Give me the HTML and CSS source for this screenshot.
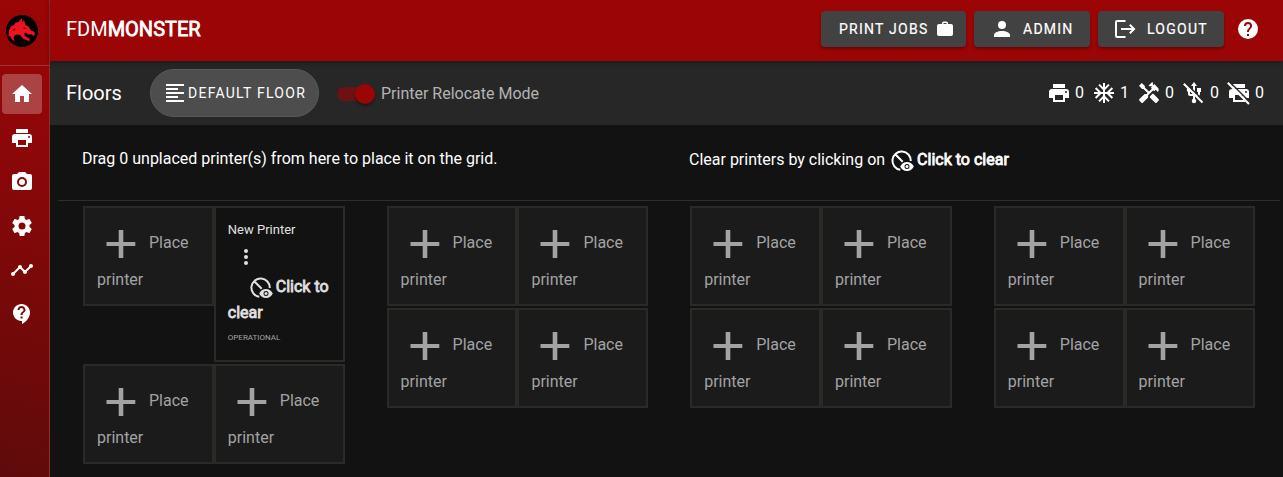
FILE: index.html
```
<!DOCTYPE html>
<html lang="en">
<head>
<meta charset="utf-8">
<title>FDM Monster</title>
<link rel="stylesheet" href="styles.css">
</head>
<body>
<svg class="sprite" aria-hidden="true">
  <symbol id="home" viewBox="0 0 24 24"><path d="M10,20V14H14V20H19V12H22L12,3L2,12H5V20H10Z"/></symbol>
  <symbol id="printer" viewBox="0 0 24 24"><path d="M18,3H6V7H18M19,12A1,1 0 0,1 18,11A1,1 0 0,1 19,10A1,1 0 0,1 20,11A1,1 0 0,1 19,12M16,19H8V14H16M19,8H5A3,3 0 0,0 2,11V17H6V21H18V17H22V11A3,3 0 0,0 19,8Z"/></symbol>
  <symbol id="camera" viewBox="0 0 24 24"><path d="M4,4H7L9,2H15L17,4H20A2,2 0 0,1 22,6V18A2,2 0 0,1 20,20H4A2,2 0 0,1 2,18V6A2,2 0 0,1 4,4M12,7A5,5 0 0,0 7,12A5,5 0 0,0 12,17A5,5 0 0,0 17,12A5,5 0 0,0 12,7M12,9A3,3 0 0,1 15,12A3,3 0 0,1 12,15A3,3 0 0,1 9,12A3,3 0 0,1 12,9Z"/></symbol>
  <symbol id="cog" viewBox="0 0 24 24"><path d="M12,15.5A3.5,3.5 0 0,1 8.5,12A3.5,3.5 0 0,1 12,8.5A3.5,3.5 0 0,1 15.5,12A3.5,3.5 0 0,1 12,15.5M19.43,12.97C19.47,12.65 19.5,12.33 19.5,12C19.5,11.67 19.47,11.34 19.43,11L21.54,9.37C21.73,9.22 21.78,8.95 21.66,8.73L19.66,5.27C19.54,5.05 19.27,4.96 19.05,5.05L16.56,6.05C16.04,5.66 15.5,5.32 14.87,5.07L14.5,2.42C14.46,2.18 14.25,2 14,2H10C9.75,2 9.54,2.18 9.5,2.42L9.13,5.07C8.5,5.32 7.96,5.66 7.44,6.05L4.95,5.05C4.73,4.96 4.46,5.05 4.34,5.27L2.34,8.73C2.21,8.95 2.27,9.22 2.46,9.37L4.57,11C4.53,11.34 4.5,11.67 4.5,12C4.5,12.33 4.53,12.65 4.57,12.97L2.46,14.63C2.27,14.78 2.21,15.05 2.34,15.27L4.34,18.73C4.46,18.95 4.73,19.03 4.95,18.95L7.44,17.94C7.96,18.34 8.5,18.68 9.13,18.93L9.5,21.58C9.54,21.82 9.75,22 10,22H14C14.25,22 14.46,21.82 14.5,21.58L14.87,18.93C15.5,18.67 16.04,18.34 16.56,17.94L19.05,18.95C19.27,19.03 19.54,18.95 19.66,18.73L21.66,15.27C21.78,15.05 21.73,14.78 21.54,14.63L19.43,12.97Z"/></symbol>
  <symbol id="timeline" viewBox="0 0 24 24"><path d="M23,8c0,1.1-0.9,2-2,2c-0.18,0-0.35-0.02-0.51-0.07l-3.56,3.55C16.98,13.64,17,13.82,17,14c0,1.1-0.9,2-2,2s-2-0.9-2-2c0-0.18,0.02-0.36,0.07-0.52l-2.55-2.55C10.36,10.98,10.18,11,10,11s-0.36-0.02-0.52-0.07l-4.55,4.56C4.98,15.65,5,15.82,5,16c0,1.1-0.9,2-2,2s-2-0.9-2-2s0.9-2,2-2c0.18,0,0.35,0.02,0.51,0.07l4.56-4.55C8.02,9.36,8,9.18,8,9c0-1.1,0.9-2,2-2s2,0.9,2,2c0,0.18-0.02,0.36-0.07,0.52l2.55,2.55C14.64,12.02,14.82,12,15,12s0.36,0.02,0.52,0.07l3.55-3.56C19.02,8.35,19,8.18,19,8c0-1.1,0.9-2,2-2S23,6.9,23,8z"/></symbol>
  <symbol id="support" viewBox="0 0 24 24"><path d="M11.5 2C6.81 2 3 5.81 3 10.5S6.81 19 11.5 19h.5v3c4.86-2.34 8-7 8-11.5C20 5.81 16.19 2 11.5 2zm1 14.5h-2v-2h2v2zm0-3.5h-2c0-3.25 3-3 3-5 0-1.1-.9-2-2-2s-2 .9-2 2h-2c0-2.21 1.79-4 4-4s4 1.79 4 4c0 2.5-3 2.75-3 5z"/></symbol>
  <symbol id="help" viewBox="0 0 24 24"><path d="M15.07,11.25L14.17,12.17C13.45,12.89 13,13.5 13,15H11V14.5C11,13.39 11.45,12.39 12.17,11.67L13.41,10.41C13.78,10.05 14,9.55 14,9C14,7.89 13.1,7 12,7A2,2 0 0,0 10,9H8A4,4 0 0,1 12,5A4,4 0 0,1 16,9C16,9.88 15.64,10.67 15.07,11.25M13,19H11V17H13M12,2A10,10 0 0,0 2,12A10,10 0 0,0 12,22A10,10 0 0,0 22,12C22,6.47 17.5,2 12,2Z"/></symbol>
  <symbol id="account" viewBox="0 0 24 24"><path d="M12,4A4,4 0 0,1 16,8A4,4 0 0,1 12,12A4,4 0 0,1 8,8A4,4 0 0,1 12,4M12,14C16.42,14 20,15.79 20,18V20H4V18C4,15.79 7.58,14 12,14Z"/></symbol>
  <symbol id="logout" viewBox="0 0 24 24"><path d="M4 3H12.5V5H4V19H12.5V21H4A2 2 0 0 1 2 19V5A2 2 0 0 1 4 3ZM17.5 7L22.5 12L17.5 17L16.1 15.6L18.7 13H8V11H18.7L16.1 8.4Z"/></symbol>
  <symbol id="bag" viewBox="0 0 18 18"><path d="M6 4V3A1.7 1.7 0 0 1 7.7 1.5H10.3A1.7 1.7 0 0 1 12 3V4H15A2 2 0 0 1 17 6V14A2 2 0 0 1 15 16H3A2 2 0 0 1 1 14V6A2 2 0 0 1 3 4ZM7.5 4H10.5V3H7.5Z"/></symbol>
  <symbol id="snow" viewBox="0 0 24 24"><path d="M22 11h-4.17l3.24-3.24-1.41-1.42L15 11h-2V9l4.66-4.66-1.42-1.41L13 6.17V2h-2v4.17L7.76 2.93 6.34 4.34 11 9v2H9L4.34 6.34 2.93 7.76 6.17 11H2v2h4.17l-3.24 3.24 1.41 1.42L9 13h2v2l-4.66 4.66 1.42 1.41L11 17.83V22h2v-4.17l3.24 3.24 1.42-1.41L13 15v-2h2l4.66 4.66 1.41-1.42L17.83 13H22z"/></symbol>
  <symbol id="tools" viewBox="0 0 24 24"><path d="M21.67 18.17l-5.3-5.3h-.99l-2.54 2.54v.99l5.3 5.3c.39.39 1.02.39 1.41 0l2.12-2.12c.39-.38.39-1.02 0-1.41z"/><path d="M17.34 10.19l1.41-1.41 2.12 2.12c1.17-1.17 1.17-3.07 0-4.24l-3.54-3.54-1.41 1.41V1.71L15.22 1l-3.54 3.54.71.71h2.83l-1.41 1.41 1.06 1.06-2.89 2.89-4.13-4.13V5.06L4.83 2.04 2 4.87 5.03 7.9h1.41l4.13 4.13-.85.85H7.6l-5.3 5.3c-.39.39-.39 1.02 0 1.41l2.12 2.12c.39.39 1.02.39 1.41 0l5.3-5.3v-2.12l5.15-5.15 1.06 1.04z"/></symbol>
  <symbol id="usb-off" viewBox="0 0 24 24"><path d="M15,7V11H16V13H13V5H15L12,1L9,5H11V13H8V10.93C8.7,10.56 9.2,9.85 9.2,9C9.2,7.78 8.21,6.8 7,6.8C5.78,6.8 4.8,7.78 4.8,9C4.8,9.85 5.3,10.56 6,10.93V13A2,2 0 0,0 8,15H11V18.05C10.29,18.41 9.8,19.15 9.8,20A2.2,2.2 0 0,0 12,22.2A2.2,2.2 0 0,0 14.2,20C14.2,19.15 13.71,18.41 13,18.05V15H16A2,2 0 0,0 18,13V11H19V7H15Z"/><path class="slash-gap" d="M4 2.200L21.500 19.700"/><path class="slash" d="M1.800 2.800L20.500 21.500"/></symbol>
  <symbol id="printer-off" viewBox="0 0 24 24"><path d="M18,3H6V7H18M19,12A1,1 0 0,1 18,11A1,1 0 0,1 19,10A1,1 0 0,1 20,11A1,1 0 0,1 19,12M16,19H8V14H16M19,8H5A3,3 0 0,0 2,11V17H6V21H18V17H22V11A3,3 0 0,0 19,8Z"/><path class="slash-gap" d="M3 1.200L23.500 21.700"/><path class="slash" d="M.8 1.800L22 23"/></symbol>
  <symbol id="floor" viewBox="0 0 24 24"><path d="M3,3H21V5H3V3M3,7H15V9H3V7M3,11H21V13H3V11M3,15H15V17H3V15M3,19H21V21H3V19Z"/></symbol>
  <symbol id="dots" viewBox="0 0 24 24"><circle cx="12" cy="6" r="2"/><circle cx="12" cy="12" r="2"/><circle cx="12" cy="18" r="2"/></symbol>
  <symbol id="clear" viewBox="0 0 24 24"><path class="line" d="M10.300 20.800A9.200 9.200 0 1 1 20.800 12M5 5L12.700 12.700"/><path fill-rule="evenodd" d="M17 13C13.900 13 11.300 14.800 10.200 17.500C11.300 20.200 13.900 22 17 22S22.700 20.200 23.800 17.500C22.700 14.800 20.100 13 17 13ZM17 15A2.500 2.500 0 1 1 17 20A2.500 2.500 0 1 1 17 15Z"/><circle cx="17" cy="17.500" r="1.500"/></symbol>
  <symbol id="place" viewBox="0 0 48 48"><path d="M38.300 26h-12v12h-4.600v-12H9.500v-4h12.200V10h4.600v12h12z"/></symbol>
</svg>

<div class="app">
  <nav class="sidebar">
    <div class="brand">
      <svg class="logo" viewBox="0 0 32 32"><circle cx="16" cy="16" r="16"/><path class="dragon" d="M2.500 21L3 15L5 11.500L8 10L9.500 7.500L12.500 7L16 3L16.200 7.500L18 5L19.500 10L22.500 11.500L25 15.500L28.500 17L28.800 20L27 21L26 19.500L22 19.500L20 17.500L18 18.500L19.500 21.500L23.500 23.500V26.500L20.500 25L17.500 24L14 20L11.500 19.500L8.500 20.500L7.500 23L9 26.500L5.500 24L4.500 21.500Z"/><path d="M17.500 12l3 1.500-2.500.3zM6 15l4-1.500-2 2z"/></svg>
    </div>
    <div class="nav-list">
      <a class="nav-item active"><svg class="icon"><use href="#home"/></svg></a>
      <a class="nav-item"><svg class="icon"><use href="#printer"/></svg></a>
      <a class="nav-item"><svg class="icon"><use href="#camera"/></svg></a>
      <a class="nav-item"><svg class="icon"><use href="#cog"/></svg></a>
      <a class="nav-item"><svg class="icon"><use href="#timeline"/></svg></a>
      <a class="nav-item"><svg class="icon"><use href="#support"/></svg></a>
    </div>
  </nav>

  <div class="main">
    <header class="topbar">
      <div class="title">FDM<span class="strong">MONSTER</span></div>
      <div class="actions">
        <button class="btn jobs">PRINT JOBS<svg class="icon bag"><use href="#bag"/></svg></button>
        <button class="btn admin"><svg class="icon"><use href="#account"/></svg>ADMIN</button>
        <button class="btn logout"><svg class="icon"><use href="#logout"/></svg>LOGOUT</button>
        <svg class="icon help"><use href="#help"/></svg>
      </div>
    </header>

    <div class="toolbar">
      <div class="floors">Floors</div>
      <button class="chip"><svg class="icon"><use href="#floor"/></svg>DEFAULT FLOOR</button>
      <div class="switch"><span class="track"><span class="thumb"></span></span>Printer Relocate Mode</div>
      <div class="stats">
        <span class="stat"><svg class="icon"><use href="#printer"/></svg>0</span>
        <span class="stat"><svg class="icon"><use href="#snow"/></svg>1</span>
        <span class="stat"><svg class="icon"><use href="#tools"/></svg>0</span>
        <span class="stat"><svg class="icon"><use href="#usb-off"/></svg>0</span>
        <span class="stat"><svg class="icon"><use href="#printer-off"/></svg>0</span>
      </div>
    </div>

    <section class="hints">
      <div class="hint">Drag 0 unplaced printer(s) from here to place it on the grid.</div>
      <div class="hint clear-hint">Clear printers by clicking on <svg class="icon"><use href="#clear"/></svg><span class="strong">Click to clear</span></div>
    </section>

    <section class="grid">
      <div class="group">
        <div class="cell"><div class="place"><svg class="plus"><use href="#place"/></svg>Place</div>printer</div>
        <div class="cell occupied">
          <div class="name">New Printer</div>
          <svg class="icon dots"><use href="#dots"/></svg>
          <div class="clear-action"><svg class="icon"><use href="#clear"/></svg><span class="strong">Click to clear</span></div>
          <div class="state">OPERATIONAL</div>
        </div>
        <div class="cell"><div class="place"><svg class="plus"><use href="#place"/></svg>Place</div>printer</div>
        <div class="cell"><div class="place"><svg class="plus"><use href="#place"/></svg>Place</div>printer</div>
      </div>
      <div class="group">
        <div class="cell"><div class="place"><svg class="plus"><use href="#place"/></svg>Place</div>printer</div>
        <div class="cell"><div class="place"><svg class="plus"><use href="#place"/></svg>Place</div>printer</div>
        <div class="cell"><div class="place"><svg class="plus"><use href="#place"/></svg>Place</div>printer</div>
        <div class="cell"><div class="place"><svg class="plus"><use href="#place"/></svg>Place</div>printer</div>
      </div>
      <div class="group">
        <div class="cell"><div class="place"><svg class="plus"><use href="#place"/></svg>Place</div>printer</div>
        <div class="cell"><div class="place"><svg class="plus"><use href="#place"/></svg>Place</div>printer</div>
        <div class="cell"><div class="place"><svg class="plus"><use href="#place"/></svg>Place</div>printer</div>
        <div class="cell"><div class="place"><svg class="plus"><use href="#place"/></svg>Place</div>printer</div>
      </div>
      <div class="group">
        <div class="cell"><div class="place"><svg class="plus"><use href="#place"/></svg>Place</div>printer</div>
        <div class="cell"><div class="place"><svg class="plus"><use href="#place"/></svg>Place</div>printer</div>
        <div class="cell"><div class="place"><svg class="plus"><use href="#place"/></svg>Place</div>printer</div>
        <div class="cell"><div class="place"><svg class="plus"><use href="#place"/></svg>Place</div>printer</div>
      </div>
    </section>
  </div>
</div>
</body>
</html>
```

FILE: styles.css
```
* { box-sizing: border-box; }
body {
  margin: 0;
  background: #121212;
  color: #fff;
  font: 400 16px/24px Roboto, sans-serif;
  overflow: hidden;
}
.sprite { display: none; }
.icon { width: 24px; height: 24px; flex: none; fill: currentColor; }
.line { fill: none; stroke: currentColor; stroke-width: 2; }
.slash { fill: none; stroke: currentColor; stroke-width: 2; }
.slash-gap { fill: none; stroke: #272727; stroke-width: 1.4; }
.strong { -webkit-text-stroke: 0.8px currentColor; }

.app { display: flex; height: 477px; }
.sidebar {
  width: 50px;
  flex: none;
  border-right: 1px solid #952d2d;
  background: linear-gradient(195deg, #9b0505 0%, #8f0708 28%, #760909 65%, #5f0b0b 100%);
}
.brand { height: 66px; padding: 15px 0 0 6px; border-bottom: 1px solid #a83030; }
.logo { display: block; width: 32px; height: 32px; }
.dragon { fill: #ed1320; }
.nav-list { display: flex; flex-direction: column; gap: 4px; padding: 8px 0 0 2px; }
.nav-item {
  display: flex;
  align-items: center;
  justify-content: center;
  width: 40px;
  height: 40px;
  border-radius: 4px;
}
.nav-item.active { background: #ac4343; }

.main { flex: 1; min-width: 0; display: flex; flex-direction: column; }
.topbar {
  height: 61px;
  flex: none;
  display: flex;
  align-items: center;
  justify-content: space-between;
  padding: 0 23px 3px 16px;
  background: #9b0505;
  box-shadow: 0 2px 5px rgba(0, 0, 0, .35);
  z-index: 1;
}
.title { font-size: 20px; }
.actions { display: flex; align-items: center; }
.btn {
  display: flex;
  align-items: center;
  height: 36px;
  padding: 0;
  border: 0;
  border-radius: 4px;
  background: #424242;
  color: #fff;
  font: 400 14px/20px Roboto, sans-serif;
  letter-spacing: 1.25px;
  -webkit-text-stroke: 0.2px currentColor;
  box-shadow: 0 2px 3px rgba(0, 0, 0, .3);
  margin-right: 8px;
}
.jobs { width: 145px; padding-left: 18px; justify-content: space-between; padding-right: 12px; }
.bag { width: 18px; height: 18px; }
.admin { width: 116px; padding-left: 16px; gap: 9px; }
.logout { width: 126px; padding-left: 15px; gap: 10px; margin-right: 12px; }

.toolbar {
  height: 64px;
  flex: none;
  display: flex;
  align-items: center;
  padding: 0 18px 0 16px;
  background: #272727;
}
.floors { width: 84px; font-size: 20px; }
.chip {
  display: flex;
  align-items: center;
  gap: 1px;
  width: 169px;
  height: 48px;
  padding: 0 0 0 12px;
  border: 1px solid #595959;
  border-radius: 24px;
  background: #4d4d4d;
  color: #fff;
  font: 400 14px/20px Roboto, sans-serif;
  letter-spacing: 1.25px;
}
.switch { display: flex; align-items: center; gap: 6px; margin-left: 18px; padding-top: 2px; color: #b4b4b4; }
.track { width: 38px; height: 14px; border-radius: 7px; background: #6d1214; display: flex; align-items: center; justify-content: flex-end; }
.thumb { width: 20px; height: 20px; border-radius: 50%; background: #9b0505; box-shadow: 0 2px 3px rgba(0, 0, 0, .4); }
.stats { display: flex; margin-left: auto; }
.stat { display: flex; width: 45px; gap: 4px; align-items: center; }
.stat:last-child { width: 38px; }

.hints {
  display: flex;
  height: 76px;
  flex: none;
  margin: 0 3px 0 8px;
  padding: 22px 24px 0;
  border-bottom: 1px solid #2e2e2e;
}
.hint { width: 607px; flex: none; }
.clear-hint { display: flex; gap: 4px; width: auto; padding-top: 1px; }
.clear-hint .icon { margin: 1px -1px 0 1px; }

.grid { display: grid; grid-template-columns: repeat(4, 261.6px); column-gap: 42px; padding: 5px 0 0 33px; }
.group { display: grid; grid-template-columns: 1fr 1fr; row-gap: 2px; align-items: start; align-content: start; }
.cell {
  height: 100px;
  padding: 12px;
  border: 2px solid #2b2a27;
  background: #1b1b1b;
  color: #a3a3a3;
}
.place { display: flex; height: 48px; gap: 4px; line-height: 45px; }
.plus { width: 48px; height: 48px; flex: none; fill: #a3a3a3; }
.occupied { height: 156px; background: #121212; color: #e0e0e0; }
.name { font-size: 13px; line-height: 19px; }
.dots { display: block; margin: 6px 0 0 6px; }
.clear-action { margin-top: 5px; line-height: 25px; text-indent: 21px; }
.clear-action .icon { vertical-align: -8px; margin-right: 3px; }
.state { margin-top: 7px; font-size: 8px; line-height: 12px; color: #a3a3a3; }
```
